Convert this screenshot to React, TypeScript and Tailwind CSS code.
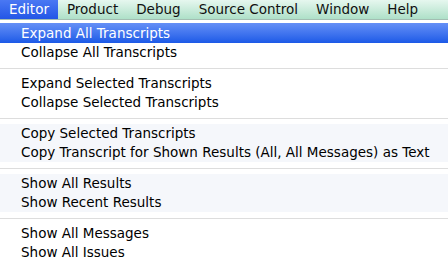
import React from "react"

const menuBar = ["Editor", "Product", "Debug", "Source Control", "Window", "Help"]

const groups = [
  ["Expand All Transcripts", "Collapse All Transcripts"],
  ["Expand Selected Transcripts", "Collapse Selected Transcripts"],
  ["Copy Selected Transcripts", "Copy Transcript for Shown Results (All, All Messages) as Text"],
  ["Show All Results", "Show Recent Results"],
  ["Show All Messages", "Show All Issues"],
]

// faint tint of the window showing through the translucent menu
const tinted = [false, false, true, true, false]

const App = () => {
  return (
    <div className="h-[257px] w-[448px] overflow-hidden bg-white font-['DejaVu_Sans',sans-serif] text-[13.5px] text-black">
      <div className="flex h-[20px] items-stretch border-b border-[#a3beb2] bg-gradient-to-b from-[#e6f7ef] to-[#aee0c8]">
        {menuBar.map((item, i) => (
          <div
            key={item}
            className={
              i === 0
                ? "flex items-center bg-gradient-to-b from-[#4a78f3] to-[#2356e6] px-[9px] text-white"
                : "flex items-center px-[9px] text-[#111]"
            }
          >
            {item}
          </div>
        ))}
      </div>
      <div className="pt-[3px]">
        {groups.map((group, gi) => (
          <div key={gi}>
            {gi > 0 && (
              <div className="flex h-[12px] items-center">
                <div className="h-px w-full bg-[#dddddd]" />
              </div>
            )}
            <div className={tinted[gi] ? "bg-[#f5f7fb]" : ""}>
              {group.map((label, li) => (
                <div
                  key={label}
                  className={
                    gi === 0 && li === 0
                      ? "flex h-[20px] items-center bg-gradient-to-b from-[#658ff6] to-[#1b59e7] pl-[21px] text-white"
                      : "flex h-[19px] items-center pl-[21px]"
                  }
                >
                  {label}
                </div>
              ))}
            </div>
          </div>
        ))}
      </div>
    </div>
  )
}

export default App
